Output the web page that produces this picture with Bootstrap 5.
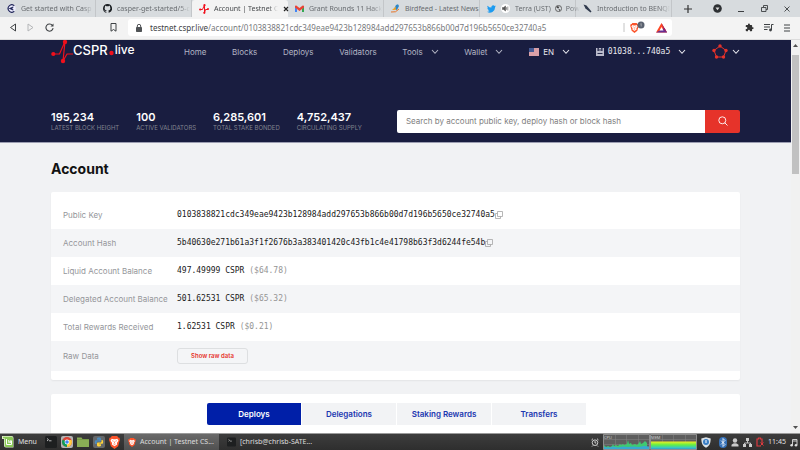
<!DOCTYPE html>
<html lang="en">
<head>
<meta charset="utf-8">
<meta name="viewport" content="width=device-width, initial-scale=1">
<title>Account | Testnet CSPR.live</title>
<link href="https://cdn.jsdelivr.net/npm/bootstrap@5.3.0/dist/css/bootstrap.min.css" rel="stylesheet">
<style>
  body { font: 8px/12px Inter, "Liberation Sans", sans-serif; background: #f1f2f4; color: #1c1c1c; }
  svg { display: block; flex: none; }
  button, input { font-family: inherit; }
  .plain { border: 0; background: none; padding: 0; color: inherit; }
  .sys { font-family: "Noto Sans", sans-serif; font-size: 7px; }
  .mono { font-family: "DejaVu Sans Mono", "Liberation Mono", monospace; }

  /* browser frame */
  .tabstrip { height: 17px; background: #d7dbde; color: #686c70; }
  .tab { flex: 0 1 96px; min-width: 0; height: 17px; padding: 0 2px 0 7px; gap: 5px; border-right: 1px solid #c3c6c9; }
  .tab-on { background: #f3f3f3; color: #45484b; border-right: 0; border-radius: 3px 3px 0 0; padding-right: 5px; }
  .tab-name { flex: 1; white-space: nowrap; text-align: left; -webkit-mask-image: linear-gradient(90deg, #000 85%, transparent); mask-image: linear-gradient(90deg, #000 85%, transparent); }
  .tab-name.whole { -webkit-mask-image: none; mask-image: none; }
  .winbtns { gap: 16px; padding-right: 10px; color: #3c3f42; }
  .toolbar { height: 23px; background: #f3f3f3; padding: 0 10px 0 9px; color: #3f4245; border-bottom: 1px solid #dcdcdc; }
  .travel { gap: 10px; }
  .address { background: #fff; border-radius: 3px; height: 17px; padding: 0 5px 0 8px; margin: 0 73px 0 11px; }
  .site-url { font-size: 8px; color: #77797c; white-space: nowrap; }
  .site-url b { font-weight: 400; color: #3e4144; }

  /* page */
  .gutter { padding-left: 51px; padding-right: 51px; }
  .masthead { background: #191d40; height: 103px; border-bottom: 1px solid #9c9eb2; }
  .mainnav { height: 24px; color: #b3b5c4; }
  .mainnav a, .mainnav button { color: inherit; text-decoration: none; font-size: 8px; line-height: 12px; }
  .mainnav .bright { color: #e8e9ef; }
  .mainnav .brand-box { color: #fff; width: 133px; }
  .brand-text { font-size: 13px; line-height: 20px; font-weight: 500; }
  .brand-text small { font-size: 12px; }
  .summary { margin-top: 46px; gap: 35px; }
  .figures { gap: 17px; }
  .figures dd { font-size: 11px; line-height: 13px; font-weight: 600; color: #fff; margin: 0; }
  .figures dt { font-size: 6px; line-height: 8px; font-weight: 400; color: #81838f; white-space: nowrap; }
  .search input { font-size: 8px; line-height: 12px; height: 23px; padding: 0 9px; border: 0; border-radius: 2px 0 0 2px; color: #555; }
  .search input::placeholder { color: #808080; opacity: 1; }
  .search button { width: 35px; height: 23px; background: #e6332a; border-radius: 0 2px 2px 0; display: grid; place-items: center; }
  h1 { font-size: 14px; line-height: 18px; font-weight: 700; margin: 17px 0 14px; color: #121212; }
  .panel { background: #fff; border-radius: 2px; box-shadow: 0 1px 2px rgba(0,0,0,.06); }
  .facts { padding: 9px 0; margin-bottom: 14px; }
  .facts table { width: 100%; }
  .facts tr { height: 28px; }
  .facts tr:last-child { height: 30px; }
  .facts tr:nth-child(even) { background: #f4f5f7; }
  .facts th { width: 125px; padding-left: 12px; font-weight: 400; color: #94969a; white-space: nowrap; }
  .facts td { font-size: 8px; color: #202020; padding-top: 1px; }
  .facts small { font-size: 8px; color: #949494; }
  .rawbtn { border: 1px solid #dddfe1; border-radius: 3px; background: #f4f5f7; color: #e6332a; font-size: 6px; line-height: 14px; width: 71px; padding: 0; font-weight: 600; }
  .switch { gap: 1px; padding: 9px 154px 9px 156px; }
  .switch button { flex: 1; border: 0; height: 22px; background: #f2f3f5; color: #2036b0; font-size: 8px; line-height: 12px; font-weight: 600; padding: 0; white-space: nowrap; }
  .switch .chosen { background: #001fa8; color: #fff; border-radius: 2px 0 0 2px; }
  .scroller { width: 9px; background: #f1f1f1; }
  .thumb { width: 7px; height: 119px; background: #c1c1c1; }

  /* desktop panel */
  .dock { height: 17px; background: linear-gradient(#3d3d3d, #2e2e2e); border-top: 1px solid #9b9b9b; color: #e0e0e0; padding: 0 2px; }
  .task { width: 95px; height: 16px; gap: 4px; padding: 0 4px; white-space: nowrap; color: #ddd; }
  .task-on { background: linear-gradient(#6a6a6a, #505050); }
</style>
</head>
<body class="d-flex flex-column vh-100 overflow-hidden">

<svg width="0" height="0" class="position-absolute" aria-hidden="true">
  <symbol id="chev" viewBox="0 0 8 6"><path d="M1 1l3 3.3L7 1" fill="none" stroke="currentColor" stroke-width="1.1"/></symbol>
  <symbol id="lion" viewBox="0 0 12 14"><path d="M3 0h6l1 1.500 1.500.2.5 2.500-.6 1.300L10 11l-4 3-4-3L.6 5.500 0 4.200.5 1.700 2 1.500z" fill="#fb542b"/><path d="M3 2.800l2 .6h2l2-.6L10.400 5 8.600 7.500l.3 1.700L6 11.200 3.100 9.200l.3-1.700L1.600 5z" fill="#fff"/><path d="M3.500 5l1.500.7M8.500 5L7 5.700M6 6v2M4.800 8.500L6 9.300l1.200-.8" stroke="#fb542b" stroke-width=".7" fill="none"/></symbol>
  <symbol id="copy" viewBox="0 0 8 8"><path d="M2.500.5h5v5h-5zM2.500 2.500h-2v5h5v-2" fill="none" stroke="#a4a4a4" stroke-width=".8"/></symbol>
  <symbol id="term" viewBox="0 0 12 12"><rect width="12" height="12" rx="1.500" fill="#1d1f20"/><path d="M2 2.500l1.500 1.200L2 5M4 4.800h2.500" stroke="#ddd" stroke-width=".8" fill="none"/></symbol>
</svg>

<div class="tabstrip sys d-flex align-items-center">
  <button class="plain tab d-flex align-items-center"><svg width="9" height="9" viewBox="0 0 9 9"><circle cx="4.500" cy="4.500" r="4.200" fill="#eef"/><path d="M7.300 1.700A3.700 3.700 0 1 0 7.300 7.300M6.300 3L3 4.500 6.300 6M3 4.500h2.500" fill="none" stroke="#252b5c" stroke-width="1.200"/></svg><span class="tab-name">Get started with Casp</span></button>
  <button class="plain tab d-flex align-items-center"><svg width="9" height="9" viewBox="0 0 16 16"><path fill="#1b1f23" d="M8 0C3.580 0 0 3.580 0 8c0 3.540 2.290 6.530 5.470 7.590.4.070.550-.170.550-.380v-1.490C4 14.100 3.480 13.200 3.320 12.800c-.090-.230-.480-.940-.820-1.130-.280-.150-.680-.520-.010-.530.630-.010 1.080.580 1.230.820.720 1.210 1.870.870 2.330.660.070-.520.280-.870.510-1.070-1.780-.200-3.640-.890-3.640-3.950 0-.870.310-1.590.820-2.150-.080-.200-.360-1.020.080-2.120 0 0 .670-.210 2.200.820a7.600 7.600 0 0 1 4 0c1.530-1.040 2.200-.820 2.200-.820.440 1.100.160 1.920.080 2.120.510.560.820 1.270.820 2.150 0 3.070-1.870 3.750-3.650 3.950.290.250.540.730.540 1.480v2.200c0 .210.150.460.550.380A8 8 0 0 0 8 0"/></svg><span class="tab-name">casper-get-started/5-c</span></button>
  <button class="plain tab tab-on d-flex align-items-center"><svg width="10" height="10" viewBox="0 0 10 10"><path d="M1 5.500h2.500L5.500 1v8l1-3.500H9" fill="none" stroke="#f0101c" stroke-width="1"/><circle cx="1.200" cy="5.500" r="1.100" fill="#f0101c"/><circle cx="5.500" cy="1.200" r="1.100" fill="#f0101c"/><circle cx="5.300" cy="8.800" r="1.100" fill="#f0101c"/><circle cx="9" cy="5" r="1" fill="#f0101c"/></svg><span class="tab-name">Account | Testnet C</span><svg width="6" height="6" viewBox="0 0 6 6"><path d="M1 1l4 4M5 1L1 5" stroke="#222" stroke-width="1.200"/></svg></button>
  <button class="plain tab d-flex align-items-center"><svg width="9" height="8" viewBox="0 0 9 8"><path d="M0 1v6h2V3.500z" fill="#4285f4"/><path d="M9 1v6H7V3.500z" fill="#34a853"/><path d="M0 2.500V1.300C0 .4 1 .2 1.600.7L4.500 3 7.400.7C8 .2 9 .4 9 1.300v1.200L4.500 6z" fill="#ea4335"/></svg><span class="tab-name">Grant Rounds 11 Hack</span></button>
  <button class="plain tab d-flex align-items-center"><svg width="9" height="9" viewBox="0 0 9 9"><path d="M3 5L5 1l2-.7 1 1.700-2 4z" fill="#2c86c8"/><path d="M1 6l4-3.500L4.500 6z" fill="#f5a623"/><path d="M0 8q5 1 8-3" fill="none" stroke="#e8762a" stroke-width="1"/></svg><span class="tab-name whole">Birdfeed - Latest News</span></button>
  <button class="plain tab d-flex align-items-center"><svg width="9" height="8" viewBox="0 0 24 20"><path fill="#1d9bf0" d="M24 2.400a10 10 0 0 1-2.800.8A5 5 0 0 0 23.300.5a10 10 0 0 1-3.100 1.200 4.900 4.900 0 0 0-8.400 4.500A14 14 0 0 1 1.700 1a4.900 4.900 0 0 0 1.500 6.600A5 5 0 0 1 1 7a4.900 4.900 0 0 0 4 4.900 5 5 0 0 1-2.300.1 4.900 4.900 0 0 0 4.600 3.400A9.900 9.900 0 0 1 0 17.500 14 14 0 0 0 21.500 5z"/></svg><svg width="9" height="9" viewBox="0 0 9 9"><circle cx="4.500" cy="4.500" r="4.500" fill="#fff"/><path d="M1.500 3.500h1.200L4.500 2v5L2.700 5.500H1.500zM5.500 3.200v2.600M6.800 2.500v4" fill="#555" stroke="#555" stroke-width=".6"/></svg><span class="tab-name d-flex align-items-center">Terra (UST)<svg class="mx-1" width="7" height="7" viewBox="0 0 8 8"><circle cx="4" cy="4" r="3.500" fill="none" stroke="#555"/><path d="M2 1l3 1-1 2-2-.5zM4 4.500l2 .5-1 2z" fill="#444"/></svg>Pow</span></button>
  <button class="plain tab d-flex align-items-center"><svg width="9" height="9" viewBox="0 0 9 9"><path d="M.5.5l3 1 5 6-1 1-5-4z" fill="#303a4d"/></svg><span class="tab-name">Introduction to BENQI</span></button>
  <button class="plain ms-2 ps-1" aria-label="New tab"><svg width="8" height="8" viewBox="0 0 8 8"><path d="M4 0v8M0 4h8" stroke="#333" stroke-width="1.200"/></svg></button>
  <div class="winbtns d-flex align-items-center ms-auto">
    <button class="plain" aria-label="Profile"><svg width="9" height="9" viewBox="0 0 9 9"><circle cx="4.500" cy="4.500" r="4.300" fill="#2d3033"/><path d="M2.500 3.500h4l-2 2.800z" fill="#ddd"/></svg></button>
    <button class="plain" aria-label="Minimize"><svg width="7" height="7" viewBox="0 0 7 7"><path d="M0 6.500h6" stroke="currentColor"/></svg></button>
    <button class="plain" aria-label="Restore"><svg width="7" height="7" viewBox="0 0 7 7"><path d="M2.500 2V.5h4v4H5M.5 2.500H5v4H.5z" fill="none" stroke="currentColor" stroke-width=".9"/></svg></button>
    <button class="plain" aria-label="Close"><svg width="6" height="6" viewBox="0 0 6 6"><path d="M.5.5l5 5M5.500.5l-5 5" stroke="currentColor" stroke-width=".9"/></svg></button>
  </div>
</div>

<div class="toolbar sys d-flex align-items-center">
  <div class="travel d-flex align-items-center">
    <button class="plain" aria-label="Back"><svg width="8" height="9" viewBox="0 0 8 9"><path d="M6.500 1v7l-5-3.500z" fill="none" stroke="currentColor"/></svg></button>
    <button class="plain" aria-label="Forward"><svg width="8" height="9" viewBox="0 0 8 9"><path d="M1 1v7l5-3.500z" fill="none" stroke="#b4b6b8"/></svg></button>
    <button class="plain" aria-label="Reload"><svg width="9" height="9" viewBox="0 0 9 9"><path d="M7.500 2.500a3.600 3.600 0 1 0 .6 2.700" fill="none" stroke="currentColor" stroke-width="1.100"/><path d="M8.500.5v3h-3z" fill="currentColor"/></svg></button>
  </div>
  <button class="plain ms-5 ps-2" aria-label="Bookmark"><svg width="7" height="9" viewBox="0 0 7 9"><path d="M1 .5h5v7.700L3.500 6.500 1 8.200z" fill="none" stroke="currentColor"/></svg></button>
  <div class="address d-flex align-items-center flex-grow-1">
    <svg width="6" height="8" viewBox="0 0 6 8" class="me-2"><rect y="3" width="6" height="5" rx=".7" fill="#505356"/><path d="M1.300 3V2a1.700 1.700 0 0 1 3.400 0v1" fill="none" stroke="#505356"/></svg>
    <a class="site-url text-decoration-none flex-grow-1" href="#"><b>testnet.cspr.live</b>/account/0103838821cdc349eae9423b128984add297653b866b00d7d196b5650ce32740a5</a>
    <svg width="33" height="13" viewBox="0 0 33 13"><path d="M1 2v9" stroke="#c4c4c4"/><use href="#lion" x="7" y="2" width="9" height="10"/><circle cx="18" cy="4" r="3.500" fill="#5a6270"/><path d="M17.500 3l.7-.5v3" stroke="#ccc" stroke-width=".6" fill="none"/></svg>
    <svg width="11" height="10" viewBox="0 0 11 10"><path d="M5.500 0L11 9.500H0z" fill="#ff4724"/><path d="M0 9.500h11L8.500 5z" fill="#662d91"/><path d="M5.500 0L11 9.500 8 7z" fill="#9e1f63"/><path d="M5.500 4L7.500 7.500h-4z" fill="#fff"/></svg>
  </div>
  <div class="travel d-flex align-items-center">
    <button class="plain" aria-label="Extensions"><svg width="9" height="9" viewBox="0 0 24 24"><path fill="#333" d="M20.500 11H19V7a2 2 0 0 0-2-2h-4V3.500a2.500 2.500 0 0 0-5 0V5H4a2 2 0 0 0-2 2v3.800h1.500a2.700 2.700 0 0 1 0 5.400H2V20a2 2 0 0 0 2 2h3.800v-1.500a2.700 2.700 0 0 1 5.400 0V22H17a2 2 0 0 0 2-2v-4h1.500a2.500 2.500 0 0 0 0-5"/></svg></button>
    <button class="plain" aria-label="Media"><svg width="10" height="9" viewBox="0 0 10 9"><path d="M0 1.500h6M0 4h6M0 6.500h3.500M7.500 7V1.500h2" stroke="currentColor" fill="none"/><circle cx="6.500" cy="7" r="1.400" fill="currentColor"/></svg></button>
    <button class="plain" aria-label="Menu"><svg width="6" height="8" viewBox="0 0 6 8"><path d="M0 1h6M0 4h6M0 7h6" stroke="currentColor"/></svg></button>
  </div>
</div>

<div class="d-flex flex-grow-1 overflow-hidden">
  <div class="flex-grow-1 overflow-hidden">
    <header class="masthead gutter">
      <nav class="mainnav d-flex justify-content-between align-items-center">
        <a href="#" class="brand-box d-flex align-items-center"><svg width="22" height="24" viewBox="0 0 22 24"><path d="M2 14h6.500L14 1.500 12 21l4-7h6" fill="none" stroke="#f0101c" stroke-width="1.200"/><circle cx="2.300" cy="14" r="2.100" fill="#f0101c"/><circle cx="14" cy="2" r="2.200" fill="#f0101c"/><circle cx="12" cy="21" r="2.200" fill="#f0101c"/></svg><span class="brand-text pb-1 d-flex align-items-center">CSPR<svg width="7" height="12" viewBox="0 0 7 12"><circle cx="3.500" cy="9" r="2.200" fill="#f0101c"/></svg><small>live</small></span></a>
        <div class="d-flex align-items-center flex-grow-1 justify-content-between">
          <a href="#">Home</a><a href="#">Blocks</a><a href="#">Deploys</a><a href="#">Validators</a>
          <button class="plain d-flex align-items-center gap-2">Tools<svg width="8" height="6"><use href="#chev"/></svg></button>
          <button class="plain d-flex align-items-center gap-2">Wallet<svg width="8" height="6"><use href="#chev"/></svg></button>
          <button class="plain bright d-flex align-items-center gap-1"><svg width="10" height="8" viewBox="0 0 10 8"><path fill="#e9dfe4" d="M0 0h10v8H0z"/><path d="M0 1h10M0 3h10M0 5h10M0 7h10" stroke="#c9606b"/><path fill="#455a94" d="M0 0h5v4H0z"/></svg>EN<svg class="ms-1" width="8" height="6"><use href="#chev"/></svg></button>
          <button class="plain bright d-flex align-items-center gap-1"><svg width="8" height="8" viewBox="0 0 8 8"><path d="M0 0h1.500v3h1.300V0h2.400v3h1.300V0H8v8H0z" fill="#b9bacb"/><path d="M1.500 5.500h5M4 1v2" stroke="#191d40" stroke-width=".9"/></svg><span class="mono">01038...740a5</span><svg class="ms-1" width="8" height="6"><use href="#chev"/></svg></button>
          <button class="plain bright d-flex align-items-center gap-1" aria-label="Network"><svg width="16" height="15" viewBox="0 0 16 15"><path d="M8 2l6 4.500L11.500 13h-7L2 6.500z" fill="none" stroke="#e6332a" stroke-width="1"/><g fill="#e6332a"><circle cx="8" cy="2" r="1.700"/><circle cx="14" cy="6.500" r="1.700"/><circle cx="11.500" cy="13" r="1.700"/><circle cx="4.500" cy="13" r="1.700"/><circle cx="2" cy="6.500" r="1.700"/></g></svg><svg width="8" height="6"><use href="#chev"/></svg></button>
        </div>
      </nav>
      <div class="summary d-flex align-items-center">
        <dl class="figures d-flex mb-0">
          <div class="d-flex flex-column-reverse"><dt>LATEST BLOCK HEIGHT</dt><dd>195,234</dd></div>
          <div class="d-flex flex-column-reverse"><dt>ACTIVE VALIDATORS</dt><dd>100</dd></div>
          <div class="d-flex flex-column-reverse"><dt>TOTAL STAKE BONDED</dt><dd>6,285,601</dd></div>
          <div class="d-flex flex-column-reverse"><dt>CIRCULATING SUPPLY</dt><dd>4,752,437</dd></div>
        </dl>
        <form class="search d-flex flex-grow-1" role="search">
          <input type="text" class="flex-grow-1" aria-label="Search" placeholder="Search by account public key, deploy hash or block hash">
          <button class="plain" type="button" aria-label="Search"><svg width="10" height="10" viewBox="0 0 10 10"><circle cx="4.300" cy="4.300" r="3.500" fill="none" stroke="#fff" stroke-width=".9"/><path d="M6.800 6.800L9.500 9.500" stroke="#fff" stroke-width=".9"/></svg></button>
        </form>
      </div>
    </header>

    <main class="gutter">
      <h1>Account</h1>
      <section class="panel facts">
        <table>
          <tr><th scope="row">Public Key</th><td class="mono"><div class="d-flex align-items-center">0103838821cdc349eae9423b128984add297653b866b00d7d196b5650ce32740a5<button class="plain" aria-label="Copy public key"><svg width="8" height="8"><use href="#copy"/></svg></button></div></td></tr>
          <tr><th scope="row">Account Hash</th><td class="mono"><div class="d-flex align-items-center">5b40630e271b61a3f1f2676b3a383401420c43fb1c4e41798b63f3d6244fe54b<button class="plain" aria-label="Copy account hash"><svg width="8" height="8"><use href="#copy"/></svg></button></div></td></tr>
          <tr><th scope="row">Liquid Account Balance</th><td class="mono">497.49999 CSPR <small>($64.78)</small></td></tr>
          <tr><th scope="row">Delegated Account Balance</th><td class="mono">501.62531 CSPR <small>($65.32)</small></td></tr>
          <tr><th scope="row">Total Rewards Received</th><td class="mono">1.62531 CSPR <small>($0.21)</small></td></tr>
          <tr><th scope="row">Raw Data</th><td><button class="rawbtn">Show raw data</button></td></tr>
        </table>
      </section>
      <section class="panel switch d-flex">
        <button class="chosen">Deploys</button><button>Delegations</button><button>Staking Rewards</button><button>Transfers</button>
      </section>
    </main>
  </div>
  <div class="scroller d-flex flex-column align-items-center justify-content-between py-1">
    <div class="d-flex flex-column align-items-center gap-2"><svg width="5" height="3" viewBox="0 0 5 3"><path d="M0 3h5L2.500 0z" fill="#505050"/></svg><div class="thumb"></div></div>
    <svg width="5" height="3" viewBox="0 0 5 3"><path d="M0 0h5L2.500 3z" fill="#505050"/></svg>
  </div>
</div>

<footer class="dock sys d-flex align-items-center">
  <button class="plain d-flex align-items-center"><svg width="12" height="12" viewBox="0 0 12 12"><path d="M0 0h9.500a2 2 0 0 1 2 2v9.500H4a2 2 0 0 1-2-2V3H0z" fill="#dff0c8"/><path d="M1 .8h8.500A1.500 1.500 0 0 1 11 2.300V11H4.300A1.500 1.500 0 0 1 2.800 9.500V2.200H1z" fill="#8ac858"/><path d="M4.500 3v5.500h5V4.800H8.300V7M7 7V4.800H6" stroke="#fff" stroke-width="1" fill="none"/></svg><span class="ms-1 me-2">Menu</span></button>
  <div class="d-flex align-items-center gap-1">
    <button class="plain" aria-label="Terminal"><svg width="12" height="12"><use href="#term"/></svg></button>
    <button class="plain" aria-label="Chrome"><svg width="12" height="12" viewBox="0 0 12 12"><rect width="12" height="12" rx="2" fill="#b4b4b4"/><circle cx="6" cy="6" r="5" fill="#db4437"/><path d="M6 6L1.600 3.500A5 5 0 0 0 6 11z" fill="#0f9d58"/><path d="M6 6v5a5 5 0 0 0 4.500-7H6z" fill="#ffcd40"/><circle cx="6" cy="6" r="2.400" fill="#fff"/><circle cx="6" cy="6" r="1.800" fill="#4285f4"/></svg></button>
    <button class="plain" aria-label="Files"><svg width="12" height="12" viewBox="0 0 12 12"><path d="M0 1.500h4.500L5.500 3H12v8H0z" fill="#8aae55"/><path d="M0 3.500h12" stroke="#6d8f40" stroke-width=".6"/></svg></button>
    <button class="plain" aria-label="Python"><svg width="12" height="12" viewBox="0 0 12 12"><rect width="12" height="12" rx="2" fill="#65686a"/><path d="M6 1.500c-2 0-2 .7-2 1.200v1h2.200v.5H2.800C1.500 4.200 1.500 8 2.800 8h1V6.500c0-.7.500-1 1.100-1h2.200c.6 0 .9-.5.9-1V2.700c0-.8-.7-1.200-2-1.200" fill="#4b8bbe"/><path d="M6 10.500c2 0 2-.7 2-1.200v-1H5.800v-.5h3.400c1.300 0 1.300-3.800 0-3.800h-.7v1.500c0 .7-.5 1-1.100 1H5.200c-.8 0-1.200.5-1.200 1v1.800c0 .8.700 1.200 2 1.200" fill="#ffd43b"/></svg></button>
    <button class="plain" aria-label="Brave"><svg width="11" height="13"><use href="#lion"/></svg></button>
  </div>
  <button class="plain task task-on d-flex align-items-center ms-1"><svg width="8" height="9"><use href="#lion"/></svg>Account | Testnet CS...</button>
  <button class="plain task d-flex align-items-center ms-1"><svg width="9" height="10"><use href="#term"/></svg>[chrisb@chrisb-SATE...</button>
  <div class="d-flex align-items-center ms-auto">
    <svg width="8" height="9" viewBox="0 0 8 9"><circle cx="4" cy="4.700" r="2.800" fill="none" stroke="#ddd" stroke-width=".9"/><path d="M4 3v2h1.300M.5 2L2 .7M7.500 2L6 .7M2 7.500l-1 1M6 7.500l1 1" fill="none" stroke="#ddd" stroke-width=".9"/></svg>
    <svg class="ms-1" width="47" height="16" viewBox="0 0 47 16"><path fill="#5e5e5e" stroke="#aaa" stroke-width=".7" d="M.5.500h46v15H.5z"/><path d="M1 5.500h45M1 10.500h45M12.500 1v14M23.500 1v14M35.500 1v14" stroke="#858585" stroke-width=".5"/><path d="M1 15v-4l2 2 2-1 2 1 2-1 1-2 1 2 2-1 2 1 2-2 1 1 2-1 1 1 3-1 1-4 1 4 2-1 1 2 3-1 2 1 2-2 1-2 1 3 2-1 2-2 2 2v4z" fill="#3ec972"/><path d="M1 15v-2l5 .5 4-1 5 1 5-1 5 .5 5-.5 6 .5 5-1 5 .5V15z" fill="#38a9d1"/><text x="1" y="5" font-size="4" fill="#ccc">CPU</text></svg>
    <svg width="47" height="16" viewBox="0 0 47 16"><defs><linearGradient id="mem" x2="0" y2="1"><stop stop-color="#f4ee20"/><stop offset=".45" stop-color="#62ef45"/><stop offset=".8" stop-color="#3bc9bb"/><stop offset="1" stop-color="#319ed4"/></linearGradient></defs><path fill="#5e5e5e" stroke="#aaa" stroke-width=".7" d="M.5.500h46v15H.5z"/><path d="M1 5.500h45M12.500 1v8M23.500 1v8M35.500 1v8" stroke="#858585" stroke-width=".5"/><path d="M1 7.500h45V15H1z" fill="url(#mem)"/><text x="1" y="5" font-size="4" fill="#ccc">MEM</text></svg>
    <div class="d-flex align-items-center gap-1 ms-1">
      <svg width="10" height="11" viewBox="0 0 10 11"><path d="M5 .3L9.700 1.500C9.700 6 8.500 9 5 10.700 1.500 9 .3 6 .3 1.500z" fill="#dce3e8"/><circle cx="5" cy="4.900" r="3" fill="#397dc4"/><path d="M5 3v3" stroke="#fff"/></svg>
      <svg class="ms-1" width="8" height="11" viewBox="0 0 8 11"><rect width="8" height="11" rx="4" fill="#3571b8"/><path d="M2 3.500l4 4-2 2v-8l2 2-4 4" fill="none" stroke="#fff" stroke-width=".8"/></svg>
      <svg width="8" height="9" viewBox="0 0 8 9"><circle cx="4" cy="2.500" r="2.200" fill="#ccc"/><path d="M.5 8.500V6.700Q4 4 7.500 6.700v1.800z" fill="#ccc"/></svg>
      <svg width="9" height="9" viewBox="0 0 9 9"><path d="M4.500 2v3M1.500 7V5h6v2" fill="none" stroke="#ccc" stroke-width=".9"/><path d="M3 0h3v3H3zM0 6h3v3H0zM6 6h3v3H6z" fill="#ccc"/></svg>
      <svg width="8" height="10" viewBox="0 0 8 10"><path d="M5 9H1V2h1.500V1h2v1H6v4" fill="none" stroke="#dd3a3f" stroke-width="1.200"/><path d="M4.500 5.500l3 3M7.500 5.500l-3 3" stroke="#dd3a3f"/></svg>
      <time>11:45</time>
      <svg width="8" height="9" viewBox="0 0 8 9"><path d="M2.500 7V1.500h4.500V7M2.500 3H7" fill="none" stroke="#ddd" stroke-width=".9"/><circle cx="1.600" cy="7.200" r="1.300" fill="#ddd"/><circle cx="6" cy="7.200" r="1.300" fill="#ddd"/></svg>
    </div>
  </div>
</footer>
<script src="https://cdn.jsdelivr.net/npm/bootstrap@5.3.0/dist/js/bootstrap.bundle.min.js"></script>
</body>
</html>
